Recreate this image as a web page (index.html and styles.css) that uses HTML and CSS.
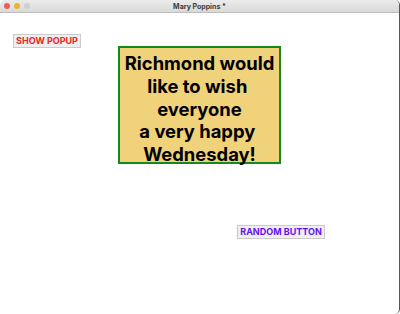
FILE: index.html
```html
<!DOCTYPE html>
<html>
  <head>
    <meta charset="UTF-8">
    <title>Mary Poppins *</title>
    <link rel="stylesheet" href="styles.css">
  </head>
  <body>
    <div class="window">
      <div class="titlebar">
        <div class="lights">
          <span class="light red"></span>
          <span class="light yellow"></span>
          <span class="light grey"></span>
        </div>
        <div class="title">Mary Poppins *</div>
      </div>

      <div class="content">
        <button id="show-popup" type="button">SHOW POPUP</button>
        <button id="random-button" type="button">RANDOM BUTTON</button>

        <div class="popup">
          Richmond would<br>
          like to wish&nbsp;<br>
          everyone<br>
          a very happy&nbsp;<br>
          Wednesday!
        </div>
      </div>
    </div>
  </body>
</html>
```

FILE: styles.css
```css
* {
  margin: 0;
  padding: 0;
  box-sizing: border-box;
}

body {
  background: #fff;
  font-family: Inter, 'Liberation Sans', sans-serif;
}

.window {
  position: relative;
  width: 400px;
  height: 314px;
  background: #fff;
  border-right: 1px solid #555;
  border-radius: 5px;
  overflow: hidden;
}

.titlebar {
  position: relative;
  height: 13px;
  background: linear-gradient(#ebebeb, #d9d9d9);
  border-bottom: 1px solid #bdbdbd;
  display: flex;
  align-items: center;
  justify-content: center;
}

.lights {
  position: absolute;
  left: 4px;
  top: 3px;
  display: flex;
  gap: 4px;
}

.light {
  width: 6px;
  height: 6px;
  border-radius: 50%;
}

.light.red { background: #ec5f57; }
.light.yellow { background: #e9b631; }
.light.grey { background: #cfcfcf; }

.title {
  font-size: 7px;
  font-weight: 700;
  color: #3a3a3a;
}

.content {
  padding: 21px 0 0 13px;
}

button {
  display: block;
  height: 14px;
  padding: 0;
  border: 1px solid #cbcbcb;
  background: #efefef;
  font-family: Inter, 'Liberation Sans', sans-serif;
  font-size: 9px;
  font-weight: 700;
  line-height: 12px;
  text-align: center;
}

#show-popup {
  width: 68px;
  color: #e8261c;
}

#random-button {
  width: 88px;
  margin: 177px 0 0 224px;
  color: #6512f0;
}

.popup {
  position: absolute;
  left: 118px;
  top: 46px;
  width: 163px;
  height: 118px;
  background: #f0d27b;
  border: 2px solid #17891c;
  padding-top: 4px;
  text-align: center;
  font-size: 18.4px;
  font-weight: 700;
  line-height: 22.8px;
  color: #000;
}
```
